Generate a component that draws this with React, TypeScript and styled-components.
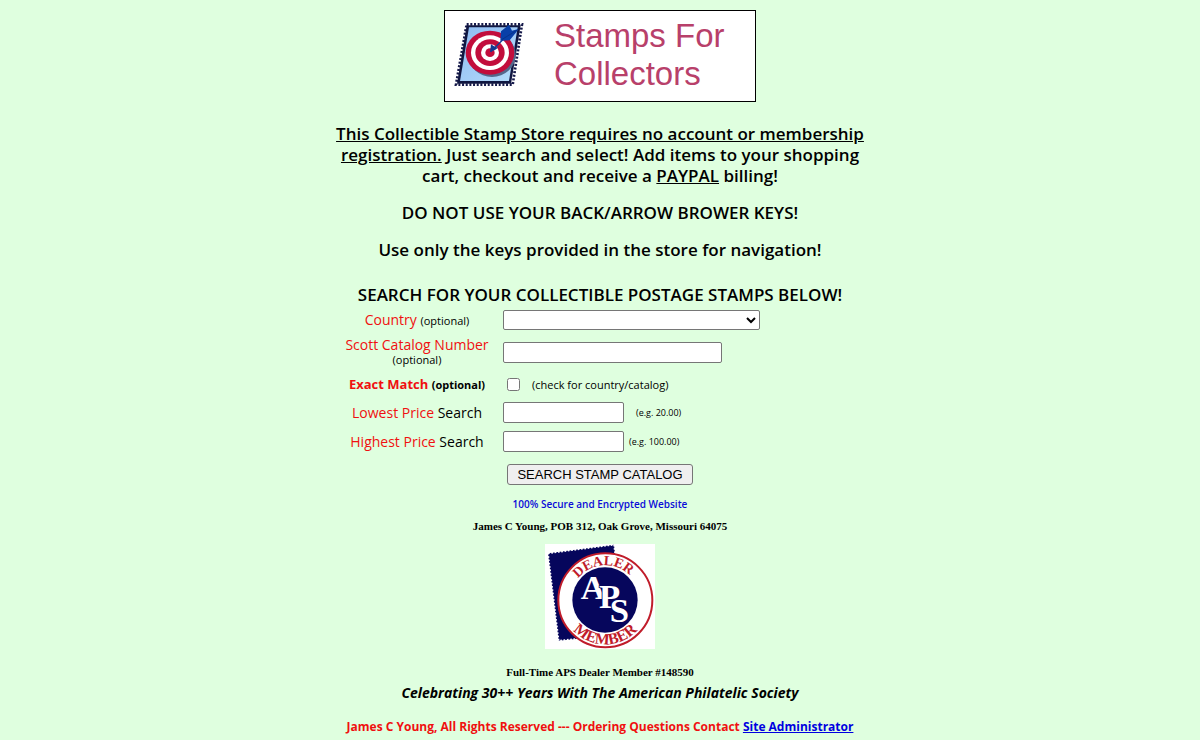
import React from "react";
import styled, { createGlobalStyle } from "styled-components";

const GlobalStyle = createGlobalStyle`
  body {
    margin: 0;
    background: #dfffdf;
    color: #000;
    font-family: "Segoe UI", "Open Sans", "Noto Sans", sans-serif;
  }
`;

const Page = styled.main`
  display: flex;
  flex-direction: column;
  align-items: center;
  padding: 10px 8px 0;
  text-align: center;
`;

const Banner = styled.header`
  display: flex;
  align-items: flex-start;
  box-sizing: border-box;
  width: 312px;
  height: 92px;
  padding: 6px 10px 0 9px;
  gap: 30px;
  border: 1px solid #000;
  background: #fff;
`;

const BannerTitle = styled.h1`
  margin: 0;
  font: 400 33px/38px "Liberation Sans", Arial, sans-serif;
  color: #b8406a;
  text-align: left;
`;

const StampArt = styled.svg`
  flex: none;
  margin-top: 4px;
`;

const Intro = styled.section`
  display: flex;
  flex-direction: column;
  gap: 16px;
  max-width: 540px;
  margin-top: 21px;
  font-size: 17px;
  line-height: 21px;
  font-weight: 600;
`;

const Paragraph = styled.p`
  margin: 0;
`;

const FormHeading = styled.h2`
  margin: 24px 0 5px;
  font-size: 17px;
  line-height: 21px;
  font-weight: 600;
`;

const SearchForm = styled.form`
  display: flex;
  flex-direction: column;
  align-items: center;
  width: 100%;
  max-width: 520px;
`;

const Fields = styled.div`
  display: grid;
  grid-template-columns: 154px 1fr;
  grid-auto-rows: minmax(19px, auto);
  column-gap: 9px;
  row-gap: 8px;
  align-items: center;
  width: 100%;
`;

const Label = styled.label<{ $bold?: boolean }>`
  font-size: ${(p) => (p.$bold ? 13 : 14)}px;
  line-height: 14px;
  font-weight: ${(p) => (p.$bold ? 700 : 400)};
`;

const Red = styled.span`
  color: #f01010;
`;

const Small = styled.small`
  font-size: 11px;
`;

const Field = styled.div<{ $gap?: number }>`
  display: flex;
  align-items: center;
  gap: ${(p) => p.$gap ?? 0}px;
`;

const Hint = styled.span<{ $size: number }>`
  font-size: ${(p) => p.$size}px;
  line-height: 14px;
`;

const CountrySelect = styled.select`
  width: 257px;
  height: 20px;
  border: 1px solid #767676;
  border-radius: 2px;
  background: #fff;
`;

const TextInput = styled.input<{ $width: number }>`
  box-sizing: border-box;
  width: ${(p) => p.$width}px;
  height: 21px;
  padding: 1px 2px;
  border: 1px solid #767676;
  border-radius: 2px;
  background: #fff;
`;

const CheckBox = styled.input`
  width: 13px;
  height: 13px;
  margin: 0 0 0 4px;
`;

const SearchButton = styled.button`
  height: 21px;
  margin-top: 12px;
  padding: 0 9px;
  border: 1px solid #767676;
  border-radius: 3px;
  background: #efefef;
  color: #000;
  font: 13px/19px "Liberation Sans", Arial, sans-serif;
`;

const Secure = styled.p`
  margin: 12px 0 0;
  font-size: 10px;
  line-height: 14px;
  font-weight: 600;
  color: #0a0ad8;
`;

const SerifLine = styled.p`
  margin: 8px 0 0;
  font: 700 11px/14px "Liberation Serif", "Times New Roman", serif;
`;

const Motto = styled.p`
  margin: 5px 0 0;
  font-size: 14px;
  line-height: 18px;
  font-weight: 700;
  font-style: italic;
`;

const Footer = styled.footer`
  margin-top: 16px;
  font-size: 12px;
  line-height: 18px;
  font-weight: 700;
  color: #f01010;
`;

const AdminLink = styled.a`
  color: #0000e0;
`;

const BadgeArt = styled.svg`
  display: block;
  margin: 11px 0 8px;
`;

function StampLogo() {
  return (
    <StampArt width="70" height="66" viewBox="42 48 210 198" role="img" aria-label="Stamp with target">
      <defs>
        <linearGradient id="sky" x1="0" y1="0" x2="1" y2="1">
          <stop offset="0" stopColor="#8fbcf2" />
          <stop offset="1" stopColor="#b4dcfb" />
        </linearGradient>
      </defs>
      <path d="M80 58H246L218 239H48Z" fill="#fff" stroke="#15194a" strokeWidth="8" strokeDasharray="6 5" />
      <path d="M80 61H242L213 236H51Z" fill="#101640" />
      <path d="M87 67H233L207 228H60Z" fill="url(#sky)" />
      <ellipse cx="156" cy="150" rx="71" ry="66" fill="#54688c" />
      <ellipse cx="150" cy="143" rx="73" ry="66" fill="#c20d3c" />
      <ellipse cx="150" cy="143" rx="57" ry="52" fill="#fff" />
      <ellipse cx="150" cy="143" rx="44" ry="40" fill="#c20d3c" />
      <ellipse cx="150" cy="143" rx="27" ry="25" fill="#fff" />
      <ellipse cx="150" cy="143" rx="14" ry="13" fill="#c20d3c" />
      <path d="M152 140L190 103" stroke="#123a91" strokeWidth="4" />
      <path d="M150 141L153 118L162 124L174 128L165 135Z" fill="#123a91" />
      <path d="M181 107L183 79L207 59L216 77L235 72L230 80L209 106Z" fill="#083fa8" />
      <path d="M185 104L235 73" stroke="#062c7d" strokeWidth="2" />
    </StampArt>
  );
}

function DealerBadge() {
  return (
    <BadgeArt width="110" height="105" viewBox="15 12 330 315" role="img" aria-label="APS Dealer Member">
      <defs>
        <path id="arc-top" d="M91 181A105 105 0 0 1 301 181" />
        <path id="arc-bottom" d="M64 181A132 132 0 0 0 328 181" />
      </defs>
      <rect x="15" y="12" width="330" height="315" fill="#fff" />
      <path d="M24 40L222 14L255 282L56 302Z" fill="#06065c" stroke="#fff" strokeWidth="5" strokeDasharray="5 5" />
      <circle cx="196" cy="181" r="141" fill="#fff" stroke="#c01c2a" strokeWidth="6" />
      <circle cx="195" cy="180" r="98" fill="#06065c" />
      <g fontFamily="'Liberation Serif', serif" fontWeight="700">
        <g fill="#c01c2a" fontSize="42" textAnchor="middle">
          <text>
            <textPath href="#arc-top" startOffset="48%">DEALER</textPath>
          </text>
          <text fontSize="47">
            <textPath href="#arc-bottom" startOffset="50%">MEMBER</textPath>
          </text>
        </g>
        <g fill="#fff" fontSize="104" stroke="#06065c" strokeWidth="5" paintOrder="stroke">
          <text x="122" y="178">A</text>
          <text x="177" y="205">P</text>
          <text x="209" y="247">S</text>
        </g>
      </g>
    </BadgeArt>
  );
}

export default function App() {
  return (
    <>
      <GlobalStyle />
      <Page>
        <Banner>
          <StampLogo />
          <BannerTitle>
            Stamps For
            <br />
            Collectors
          </BannerTitle>
        </Banner>

        <Intro>
          <Paragraph>
            <u>This Collectible Stamp Store requires no account or membership registration.</u> Just search and
            select! Add items to your shopping cart, checkout and receive a <u>PAYPAL</u> billing!
          </Paragraph>
          <Paragraph>DO NOT USE YOUR BACK/ARROW BROWER KEYS!</Paragraph>
          <Paragraph>Use only the keys provided in the store for navigation!</Paragraph>
        </Intro>

        <FormHeading>SEARCH FOR YOUR COLLECTIBLE POSTAGE STAMPS BELOW!</FormHeading>
        <SearchForm onSubmit={(e) => e.preventDefault()}>
          <Fields>
            <Label htmlFor="country">
              <Red>Country</Red> <Small>(optional)</Small>
            </Label>
            <Field>
              <CountrySelect id="country" defaultValue="">
                <option value="" aria-label="Any country" />
              </CountrySelect>
            </Field>

            <Label htmlFor="catalog">
              <Red>Scott Catalog Number</Red>
              <br />
              <Small>(optional)</Small>
            </Label>
            <Field>
              <TextInput id="catalog" type="text" $width={219} />
            </Field>

            <Label htmlFor="exact" $bold>
              <Red>Exact Match</Red> <Small>(optional)</Small>
            </Label>
            <Field $gap={12}>
              <CheckBox id="exact" type="checkbox" />
              <Hint $size={11}>(check for country/catalog)</Hint>
            </Field>

            <Label htmlFor="lowest">
              <Red>Lowest Price</Red> Search
            </Label>
            <Field $gap={12}>
              <TextInput id="lowest" type="text" $width={121} />
              <Hint $size={9}>(e.g. 20.00)</Hint>
            </Field>

            <Label htmlFor="highest">
              <Red>Highest Price</Red> Search
            </Label>
            <Field $gap={5}>
              <TextInput id="highest" type="text" $width={121} />
              <Hint $size={9}>(e.g. 100.00)</Hint>
            </Field>
          </Fields>
          <SearchButton type="submit">SEARCH STAMP CATALOG</SearchButton>
        </SearchForm>

        <Secure>100% Secure and Encrypted Website</Secure>
        <SerifLine>James C Young, POB 312, Oak Grove, Missouri 64075</SerifLine>
        <DealerBadge />
        <SerifLine>Full-Time APS Dealer Member #148590</SerifLine>
        <Motto>Celebrating 30++ Years With The American Philatelic Society</Motto>
        <Footer>
          James C Young, All Rights Reserved --- Ordering Questions Contact{" "}
          <AdminLink href="#contact">Site Administrator</AdminLink>
        </Footer>
      </Page>
    </>
  );
}
